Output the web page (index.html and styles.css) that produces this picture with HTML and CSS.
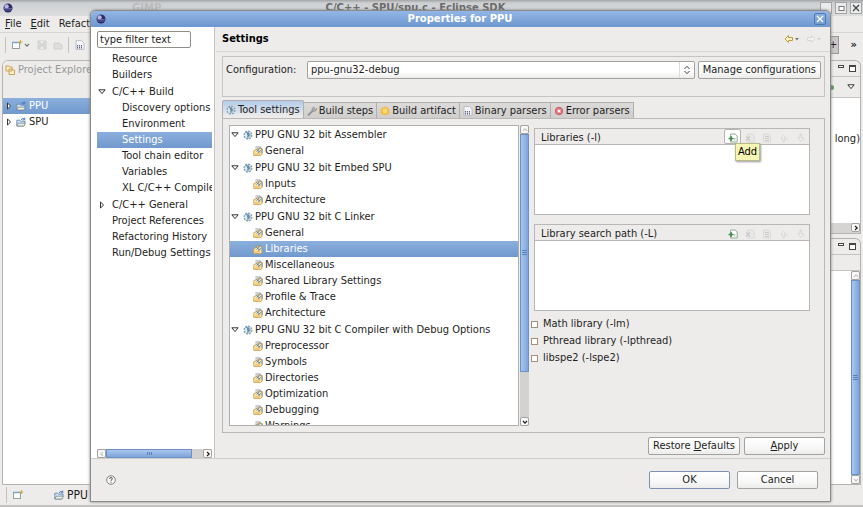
FILE: index.html
```html
<!DOCTYPE html>
<html lang="en">
<head>
<meta charset="utf-8">
<title>Properties for PPU</title>
<link rel="stylesheet" href="styles.css">
</head>
<body>
<svg class="defs" aria-hidden="true">
  <symbol id="orb" viewBox="0 0 10 10"><circle cx="5" cy="5" r="4.5" fill="#2b2a68"/><circle cx="3.6" cy="3.4" r="2.2" fill="#b9b4e0"/><path d="M1 5.5h8M1.5 7h7" stroke="#7d7ab8" stroke-width=".7"/></symbol>
  <symbol id="open" viewBox="0 0 8 8"><path d="M.8 1.8h6.4L4 5.6z" fill="#fff" stroke="#333" stroke-width="1"/></symbol>
  <symbol id="shut" viewBox="0 0 8 8"><path d="M2.5 1v6L5.6 4z" fill="#fff" stroke="#333" stroke-width="1"/></symbol>
  <symbol id="tool" viewBox="0 0 10 10"><circle cx="5" cy="5" r="3.9" fill="#dfeaf0" stroke="#7c9db2" stroke-width="1.2" stroke-dasharray="2 1"/><path d="M2.6 2.6l3 .6-1.2 1.3 1.6.6-1.2 1.6M5 2v6M6.8 3.4v3.2" fill="none" stroke="#4b7896" stroke-width=".9"/></symbol>
  <symbol id="opt" viewBox="0 0 10 10"><path d="M.8 4.600L3 3.800 4.200 2.400H9v6L7.600 9.400H.8z" fill="#fbe6ae" stroke="#cfa04a" stroke-width=".9"/><path d="M2.400 1h4.400L9.200 3.400v3.800" fill="none" stroke="#8c9cb0" stroke-width="1.100"/><path d="M3 2.600l3.800 3.800M6.600 2.600L3.600 5.600M8 4.200L5.400 6.800" stroke="#52749a" stroke-width=".9"/><path d="M2 8l5-.2" stroke="#e5b453" stroke-width="1.100"/></symbol>
  <symbol id="proj" viewBox="0 0 10 10"><path d="M.8 3.2h3l.8 1h4.6L8 9H.8z" fill="#cfe2f6" stroke="#6a8bb0" stroke-width=".9"/><path d="M2.2 6.2h7.2L8 9H1z" fill="#f8efd0" stroke="#7189a5" stroke-width=".8"/><path d="M5 2.8q2-2.4 3.6-.9M8.8.6v2.2H6.600" fill="none" stroke="#4176b3" stroke-width=".9"/></symbol>
  <symbol id="wrench" viewBox="0 0 10 10"><path d="M1 9.4L5.600 4.800" stroke="#909090" stroke-width="1.800"/><path d="M5 5.400V2.600L7.200.8v2l1.600.8L9.600 2q.2 3-2.400 3.600z" fill="#aaa" stroke="#898989" stroke-width=".5"/></symbol>
  <symbol id="sun" viewBox="0 0 10 10"><path d="M5 0l1.100 1.500L8 .9v1.900l2 .4L8.800 5l1.200 1.800-2 .4v1.900l-1.900-.6L5 10 3.900 8.500 2 9.100V7.200L0 6.800 1.200 5 0 3.200l2-.4V.9l1.900.6z" fill="#f5b942"/><circle cx="5" cy="5" r="2.400" fill="#ffdc74"/></symbol>
  <symbol id="bin" viewBox="0 0 10 10"><path d="M1 .6h5.400L9 3v6.400H1z" fill="#f6f6fa" stroke="#b4b4c2" stroke-width=".8"/><path d="M2.500 5v3.600M4.500 5v3.600M6.500 5v3.600" stroke="#5e6587" stroke-width="1.100" stroke-dasharray="1.500 .6"/></symbol>
  <symbol id="err" viewBox="0 0 10 10"><circle cx="5" cy="5" r="3.700" fill="#e4717a" stroke="#cf5d66" stroke-width="1"/><path d="M3.600 3.600l2.800 2.800M6.400 3.600L3.600 6.400" stroke="#fff" stroke-width="1.200"/></symbol>
  <symbol id="add" viewBox="0 0 10 10"><path d="M2.600 1h4.600L9.200 3v6H2.600z" fill="#fff" stroke="#88a48b" stroke-width=".9"/><path d="M.6 5.500h5M3.100 3v5" stroke="#3f8a4b" stroke-width="1.500"/><path d="M6.800 5v2.500" stroke="#9cc3a2" stroke-width="1"/></symbol>
  <symbol id="del" viewBox="0 0 10 10"><path d="M2.600 1h4.600L9.200 3v6H2.600z" fill="#e9e8e7" stroke="#d8d7d6" stroke-width=".9"/><path d="M1 3.500l4 4M5 3.500l-4 4" stroke="#cbcac9" stroke-width="1.200"/></symbol>
  <symbol id="edit" viewBox="0 0 10 10"><path d="M1.500 1h5L8.500 3v6h-7z" fill="#e9e8e7" stroke="#d8d7d6" stroke-width=".9"/><path d="M3 3.500h4M3 5.500h4M3 7.500h4" stroke="#cbcac9"/></symbol>
  <symbol id="up" viewBox="0 0 10 10"><path d="M4 9V5.500H2L4.500 2 7 5.500H5.400V9z" fill="#f4f3f2" stroke="#d2d1d0" stroke-width=".8"/><path d="M8 5v3" stroke="#ddd" /></symbol>
  <symbol id="down" viewBox="0 0 10 10"><path d="M4 1v3.500H2L4.500 8.500 7 4.500H5.400V1z" fill="#f4f3f2" stroke="#d2d1d0" stroke-width=".8"/><path d="M8 5v3" stroke="#ddd"/></symbol>
  <symbol id="min" viewBox="0 0 9 9"><rect x="1.500" y="1.500" width="5" height="2" fill="#fff" stroke="#444"/></symbol>
  <symbol id="max" viewBox="0 0 9 9"><rect x="1.500" y="1.500" width="6" height="6" fill="#fff" stroke="#444"/><path d="M1 2.500h7" stroke="#444"/></symbol>
  <symbol id="box" viewBox="0 0 9 9"><rect x="2" y="2.500" width="5" height="4" fill="#fff" stroke="#777"/></symbol>
  <symbol id="cross" viewBox="0 0 10 10"><path d="M2 2l6 6M8 2L2 8" stroke="currentColor" stroke-width="1.300"/></symbol>
  <symbol id="new" viewBox="0 0 12 10"><rect x="1.500" y="2.500" width="7" height="6" fill="#fff" stroke="#8fa59a"/><path d="M1 2.500h8" stroke="#79a3c8" stroke-width="1.500"/><path d="M9.500 0v4M7.500 2h4" stroke="#d9ac38"/></symbol>
  <symbol id="chev" viewBox="0 0 8 8"><path d="M2 3l2 2.200L6 3" fill="none" stroke="currentColor" stroke-width="1.200"/></symbol>
</svg>

<div class="desktop">
  <header class="main-title">
    <svg class="i10"><use href="#orb"/></svg>
    <span class="ghost">GIMP</span>
    <span class="main-name">C/C++ - SPU/spu.c - Eclipse SDK</span>
    <span class="win-buttons">
      <button aria-label="Minimize"></button>
      <button aria-label="Maximize"><svg class="i9"><use href="#box"/></svg></button>
      <button aria-label="Close window"><svg class="i10"><use href="#cross"/></svg></button>
    </span>
  </header>
  <nav class="menubar">
    <a href="#"><u>F</u>ile</a><a href="#"><u>E</u>dit</a><a href="#">Refactor</a>
  </nav>
  <div class="toolbar">
    <span class="grip"></span>
    <svg class="tool-new"><use href="#new"/></svg>
    <svg class="i8 soft"><use href="#chev"/></svg>
    <svg class="i10 tool-off" viewBox="0 0 10 10"><path d="M1 1h8v8H1z" fill="#ddd" stroke="#d0d0d0"/><path d="M3 1v3h4V1M3 9V6h4v3" fill="#eee" stroke="#ccc"/></svg>
    <svg class="i10 tool-off" viewBox="0 0 10 10"><path d="M1 3h5l3 2v4H1z" fill="#ddd" stroke="#d0d0d0"/></svg>
    <span class="grip"></span>
    <svg class="i10 tool-bin"><use href="#bin"/></svg>
    <span class="grip"></span>
    <span class="perspective">+</span>
    <span class="more">»</span>
  </div>
  <div class="workspace">
    <section class="explorer">
      <h2><svg class="i10" viewBox="0 0 10 10"><path d="M1 1h3l1 1h2v4H1zM4 4h3l1 1h1.500v4.500H4z" fill="#fdeec4" stroke="#c8a559"/></svg>Project Explorer</h2>
      <ul>
        <li class="selected"><svg class="i8"><use href="#shut"/></svg><svg class="i10"><use href="#proj"/></svg>PPU</li>
        <li><svg class="i8"><use href="#shut"/></svg><svg class="i10"><use href="#proj"/></svg>SPU</li>
      </ul>
    </section>
    <div class="side">
      <section class="side-top">
        <div class="side-tabs"><svg class="i9"><use href="#min"/></svg><svg class="i9"><use href="#max"/></svg></div>
        <div class="side-tools"><span class="dot"></span><svg class="i8"><use href="#open"/></svg></div>
        <div class="side-text">long)</div>
        <div class="side-scroll"><span class="sb-btn"><svg class="i8 right"><use href="#chev"/></svg></span></div>
      </section>
      <section class="side-bottom">
        <div class="side-tabs"><svg class="i9"><use href="#min"/></svg><svg class="i9"><use href="#max"/></svg></div>
        <div class="side-gap"></div>
        <div class="side-body">
          <div class="vscroll">
            <span class="sb-btn off"><svg class="i8 flip"><use href="#chev"/></svg></span>
            <span class="thumb whole"><i></i></span>
            <span class="sb-btn off"><svg class="i8"><use href="#chev"/></svg></span>
          </div>
        </div>
      </section>
    </div>
  </div>
  <footer class="statusbar"><span class="grip"></span><svg class="tool-new"><use href="#new"/></svg><svg class="i10 status-proj"><use href="#proj"/></svg>PPU</footer>
</div>

<div class="dialog" role="dialog" aria-labelledby="dialog-title">
  <div class="titlebar">
    <svg class="i10"><use href="#orb"/></svg>
    <h1 id="dialog-title">Properties for PPU</h1>
    <button class="close" aria-label="Close"><svg class="i10"><use href="#cross"/></svg></button>
  </div>
  <div class="content">
    <aside class="pages">
      <input class="filter" type="text" value="type filter text" aria-label="Filter">
      <ul class="page-tree">
        <li>Resource</li>
        <li>Builders</li>
        <li class="branch"><svg class="i8"><use href="#open"/></svg>C/C++ Build</li>
        <li class="sub">Discovery options</li>
        <li class="sub">Environment</li>
        <li class="sub selected">Settings</li>
        <li class="sub">Tool chain editor</li>
        <li class="sub">Variables</li>
        <li class="sub">XL C/C++ Compiler</li>
        <li class="branch"><svg class="i8"><use href="#shut"/></svg>C/C++ General</li>
        <li>Project References</li>
        <li>Refactoring History</li>
        <li>Run/Debug Settings</li>
      </ul>
      <div class="hscroll">
        <span class="sb-btn off"><svg class="i8 left"><use href="#chev"/></svg></span>
        <span class="thumb"><i></i></span>
        <span class="sb-btn"><svg class="i8 right"><use href="#chev"/></svg></span>
      </div>
    </aside>
    <main class="page">
      <div class="page-head">
        <h2>Settings</h2>
        <button aria-label="Back" class="back"><svg class="arrow" viewBox="0 0 16 10"><path d="M1 5l3.500-3.500v2h4v3h-4v2z" fill="#fdf3cf" stroke="#c19a3a"/><path d="M11 4h4l-2 2.500z" fill="#777"/></svg></button>
        <button aria-label="Forward" class="fwd"><svg class="arrow" viewBox="0 0 16 10"><path d="M9 5L5.500 1.500v2h-4v3h4v2z" fill="#f2f1f0" stroke="#d8d7d6"/><path d="M11 4h4l-2 2.500z" fill="#d2d1d0"/></svg></button>
      </div>
      <div class="page-body">
        <div class="config">
          <label for="config">Configuration:</label>
          <span class="select-wrap">
            <select id="config"><option>ppu-gnu32-debug</option></select>
            <svg class="spin" viewBox="0 0 8 10"><path d="M1.500 4L4 1.300 6.500 4M1.500 6L4 8.700 6.500 6" fill="none" stroke="#444"/></svg>
          </span>
          <button class="btn">Manage configurations</button>
        </div>
        <div class="tabs" role="tablist">
          <button role="tab" aria-selected="true" class="active"><svg class="i10"><use href="#tool"/></svg>Tool settings</button>
          <button role="tab"><svg class="i10"><use href="#wrench"/></svg>Build steps</button>
          <button role="tab"><svg class="i10"><use href="#sun"/></svg>Build artifact</button>
          <button role="tab"><svg class="i10"><use href="#bin"/></svg>Binary parsers</button>
          <button role="tab"><svg class="i10"><use href="#err"/></svg>Error parsers</button>
        </div>
        <div class="panel">
          <div class="tool-tree">
            <ul>
              <li class="branch"><svg class="i8"><use href="#open"/></svg><svg class="i10"><use href="#tool"/></svg>PPU GNU 32 bit Assembler</li>
              <li><svg class="i10"><use href="#opt"/></svg>General</li>
              <li class="branch"><svg class="i8"><use href="#open"/></svg><svg class="i10"><use href="#tool"/></svg>PPU GNU 32 bit Embed SPU</li>
              <li><svg class="i10"><use href="#opt"/></svg>Inputs</li>
              <li><svg class="i10"><use href="#opt"/></svg>Architecture</li>
              <li class="branch"><svg class="i8"><use href="#open"/></svg><svg class="i10"><use href="#tool"/></svg>PPU GNU 32 bit C Linker</li>
              <li><svg class="i10"><use href="#opt"/></svg>General</li>
              <li class="selected"><svg class="i10"><use href="#opt"/></svg>Libraries</li>
              <li><svg class="i10"><use href="#opt"/></svg>Miscellaneous</li>
              <li><svg class="i10"><use href="#opt"/></svg>Shared Library Settings</li>
              <li><svg class="i10"><use href="#opt"/></svg>Profile &amp; Trace</li>
              <li><svg class="i10"><use href="#opt"/></svg>Architecture</li>
              <li class="branch"><svg class="i8"><use href="#open"/></svg><svg class="i10"><use href="#tool"/></svg>PPU GNU 32 bit C Compiler with Debug Options</li>
              <li><svg class="i10"><use href="#opt"/></svg>Preprocessor</li>
              <li><svg class="i10"><use href="#opt"/></svg>Symbols</li>
              <li><svg class="i10"><use href="#opt"/></svg>Directories</li>
              <li><svg class="i10"><use href="#opt"/></svg>Optimization</li>
              <li><svg class="i10"><use href="#opt"/></svg>Debugging</li>
              <li><svg class="i10"><use href="#opt"/></svg>Warnings</li>
            </ul>
          </div>
          <div class="vscroll">
            <span class="sb-btn off"><svg class="i8 flip"><use href="#chev"/></svg></span>
            <span class="thumb"><i></i></span>
            <span class="sb-btn"><svg class="i8"><use href="#chev"/></svg></span>
          </div>
          <div class="options">
            <section class="list">
              <div class="list-head">
                <h3>Libraries (-l)</h3>
                <span class="add-wrap">
                  <button class="hover" aria-label="Add library" aria-describedby="tip"><svg class="i10"><use href="#add"/></svg></button>
                  <span class="tip" id="tip" role="tooltip">Add</span>
                </span>
                <button disabled aria-label="Delete"><svg class="i10"><use href="#del"/></svg></button>
                <button disabled aria-label="Edit"><svg class="i10"><use href="#edit"/></svg></button>
                <button disabled aria-label="Move up"><svg class="i10"><use href="#up"/></svg></button>
                <button disabled aria-label="Move down"><svg class="i10"><use href="#down"/></svg></button>
              </div>
              <div class="list-body"></div>
            </section>
            <section class="list">
              <div class="list-head">
                <h3>Library search path (-L)</h3>
                <button aria-label="Add path"><svg class="i10"><use href="#add"/></svg></button>
                <button disabled aria-label="Delete"><svg class="i10"><use href="#del"/></svg></button>
                <button disabled aria-label="Edit"><svg class="i10"><use href="#edit"/></svg></button>
                <button disabled aria-label="Move up"><svg class="i10"><use href="#up"/></svg></button>
                <button disabled aria-label="Move down"><svg class="i10"><use href="#down"/></svg></button>
              </div>
              <div class="list-body"></div>
            </section>
            <div class="checks">
              <label><input type="checkbox">Math library (-lm)</label>
              <label><input type="checkbox">Pthread library (-lpthread)</label>
              <label><input type="checkbox">libspe2 (-lspe2)</label>
            </div>
          </div>
        </div>
        <div class="page-actions">
          <button class="btn">Restore <u>D</u>efaults</button>
          <button class="btn wide"><u>A</u>pply</button>
        </div>
      </div>
    </main>
  </div>
  <footer class="dialog-foot">
    <button class="help" aria-label="Help"><svg viewBox="0 0 10 10"><circle cx="5" cy="5" r="4.300" fill="#f8f8f8" stroke="#666" stroke-width=".8"/><path d="M3.600 4q0-1.500 1.400-1.500T6.400 3.800Q6.400 4.600 5 5.200v.7M5 6.800v1" fill="none" stroke="#444" stroke-width=".9"/></svg></button>
    <button class="btn wide ok">OK</button>
    <button class="btn wide">Cancel</button>
  </footer>
</div>
</body>
</html>
```
FILE: styles.css
```css
* { box-sizing: border-box; }

body {
  margin: 0;
  font: 11px/16px "DejaVu Sans Condensed", "DejaVu Sans", sans-serif;
  color: #1e1e1e;
  background: #edeceb;
  overflow: hidden;
}

h1, h2, h3, ul { margin: 0; padding: 0; font-size: inherit; list-style: none; }
button, input, select { font: inherit; color: inherit; }
button { padding: 0; border: 0; background: none; }
a { color: inherit; text-decoration: none; }
svg { display: block; flex: none; }
.defs { position: absolute; width: 0; height: 0; }
.i8 { width: 8px; height: 8px; }
.i9 { width: 9px; height: 9px; }
.i10 { width: 10px; height: 10px; }
.left { transform: rotate(90deg); }
.right { transform: rotate(-90deg); }
.flip { transform: rotate(180deg); }
.soft { color: #777; }

/* main window */
.desktop { display: flex; flex-direction: column; height: 100vh; }
.main-title {
  position: relative;
  display: flex;
  align-items: center;
  height: 16px;
  padding: 0 1px 0 3px;
  background: linear-gradient(#a4a4a4, #cdd0d3 3px, #dcdddd);
}
.ghost { margin-left: 119px; font: bold 10px/16px "DejaVu Sans", sans-serif; color: #b9bbbd; }
.main-name {
  position: absolute;
  left: 0;
  right: 32px;
  text-align: center;
  font: bold 10px/16px "DejaVu Sans", sans-serif;
  color: #6b6b6b;
}
.win-buttons { display: flex; gap: 3px; margin-left: auto; }
.win-buttons button {
  display: grid;
  place-items: center;
  width: 12px;
  height: 12px;
  border: 1px solid #a5a5a5;
  background: #ebebeb;
  color: #444;
}
.menubar {
  display: flex;
  gap: 9px;
  height: 17px;
  padding: 0 5px;
  border-bottom: 1px solid #d6d5d4;
}
.toolbar { display: flex; align-items: center; height: 27px; padding: 0 6px 3px 5px; }
.grip { width: 1px; height: 16px; background: #c2c1c0; }
.tool-new { width: 12px; height: 10px; margin-left: 5px; }
.tool-off { margin-left: 6px; }
.tool-off + .grip { margin-left: 5px; }
.tool-bin { margin: 0 6px; }
.perspective {
  margin-left: auto;
  width: 10px;
  height: 18px;
  border: 1px solid #999;
  border-left: 0;
  background: #c9c8c7;
  text-align: center;
}
.more { margin-left: 12px; font-weight: bold; }
.workspace { display: flex; flex: 1; justify-content: space-between; min-height: 0; }
.explorer {
  width: 35%;
  border: 1px solid #b4b3b2;
  border-radius: 6px 6px 0 0;
  margin-left: 2px;
  background: #fff;
}
.explorer h2 {
  display: flex;
  align-items: center;
  gap: 3px;
  height: 37px;
  padding: 0 2px 20px;
  border-radius: 6px 6px 0 0;
  background: #edeceb;
  font-weight: normal;
  color: #999;
}
.explorer li { display: flex; align-items: center; gap: 3px; height: 16px; padding-left: 2px; }
.selected { background: linear-gradient(#8bafdd, #7199ce); color: #fff; }

.side { display: flex; flex-direction: column; gap: 4px; width: 60px; padding-right: 2px; }
.side section { display: flex; flex-direction: column; border: 1px solid #b4b3b2; border-left: 0; }
.side-top { height: 174px; border-radius: 0 6px 0 0; }
.side-bottom { flex: 1; border-radius: 0 6px 0 0; }
.side-tabs {
  display: flex;
  align-items: center;
  justify-content: flex-end;
  gap: 2px;
  height: 16px;
  padding-right: 3px;
  border-bottom: 1px solid #c4c3c2;
}
.side-tools {
  display: flex;
  align-items: center;
  justify-content: flex-end;
  gap: 13px;
  height: 21px;
  padding-right: 5px;
  border-bottom: 1px solid #c4c3c2;
}
.dot { width: 5px; height: 5px; border-radius: 50%; background: #5c9c5f; }
.side-text { flex: 1; padding-top: 33px; background: #fff; text-align: right; }
.side-scroll { display: flex; justify-content: flex-end; height: 10px; background: #d5d4d3; }
.side-gap { height: 16px; border-bottom: 1px solid #c4c3c2; }
.side-body { display: flex; flex: 1; justify-content: flex-end; background: #fff; }

.statusbar {
  display: flex;
  align-items: center;
  height: 22px;
  padding-left: 6px;
  border-bottom: 2px solid #c4c3c2;
  font-size: 12px;
}
.status-proj { margin: 0 3px 0 30px; }

/* scroll bars */
.sb-btn {
  display: grid;
  place-items: center;
  flex: none;
  width: 9px;
  height: 9px;
  border: 1px solid #a3a2a1;
  border-radius: 2px;
  background: #fafafa;
}
.off { color: #c5c5c5; }
.hscroll { display: flex; height: 9px; background: #d3d2d1; }
.hscroll .thumb { width: 86px; margin-right: auto; background: linear-gradient(#a9c6ee, #7ea4da); border: 1px solid #6d90c2; }
.vscroll { display: flex; flex-direction: column; flex: none; width: 9px; background: #d3d2d1; }
.vscroll .thumb { height: 79%; margin-bottom: auto; background: linear-gradient(90deg, #a9c6ee, #7ea4da); border: 1px solid #6d90c2; }
.vscroll .whole { flex: 1; height: auto; }
.thumb { display: grid; place-items: center; }
.thumb i { width: 5px; height: 5px; background: repeating-linear-gradient(#5c80b4 0 1px, transparent 1px 2px); }
.hscroll .thumb i { background: repeating-linear-gradient(90deg, #5c80b4 0 1px, transparent 1px 2px); height: 3px; }

/* dialog window */
.dialog {
  position: absolute;
  inset: 10px 32px 5px 90px;
  display: flex;
  flex-direction: column;
  border: 1px solid #8a8a8a;
  border-radius: 6px 6px 0 0;
  background: #edeceb;
  box-shadow: 0 0 3px #777;
}
.titlebar {
  display: flex;
  align-items: center;
  height: 16px;
  padding: 0 4px 0 5px;
  border-radius: 5px 5px 0 0;
  background: linear-gradient(#93b6e5, #6d97d0);
}
.titlebar h1 {
  flex: 1;
  text-align: center;
  font: bold 10px/16px "DejaVu Sans", sans-serif;
  color: #fff;
}
.close {
  display: grid;
  place-items: center;
  width: 12px;
  height: 12px;
  border: 1px solid #4f77b0;
  border-radius: 2px;
  color: #fff;
}
.content { display: flex; flex: 1; min-height: 0; border-bottom: 1px solid #cfcecd; }
.pages {
  display: flex;
  flex-direction: column;
  width: 124px;
  padding: 4px 2px 0 6px;
  border-right: 1px solid #c5c4c3;
  background: #fff;
}
.filter {
  width: 94px;
  height: 17px;
  padding: 0 2px;
  border: 1px solid #8f8e8d;
  border-radius: 2px;
  background: #fff;
}
.page-tree { flex: 1; min-height: 0; padding-top: 3px; overflow: hidden; white-space: nowrap; }
.page-tree li { height: 16px; padding-left: 15px; }
.page-tree .sub { padding-left: 25px; }
.page-tree .branch { display: flex; align-items: center; gap: 6px; height: 17px; padding-left: 1px; }

.page { display: flex; flex-direction: column; flex: 1; min-width: 0; margin-left: 1px; }
.page-head {
  display: flex;
  align-items: center;
  gap: 6px;
  height: 25px;
  padding: 0 8px 0 6px;
  border-bottom: 1px solid #d6d5d4;
}
.page-head h2 { flex: 1; color: #000; }
.arrow { width: 16px; height: 10px; }
.page-body { display: flex; flex-direction: column; flex: 1; min-height: 0; padding: 4px 5px 3px 6px; }
.config {
  display: flex;
  align-items: flex-start;
  gap: 3px;
  height: 41px;
  padding: 4px 3px 0 3px;
  border: 1px solid #c5c4c3;
}
.config label { width: 78px; line-height: 18px; }
.select-wrap { position: relative; flex: 1; }
.select-wrap select {
  display: block;
  width: 100%;
  height: 18px;
  padding: 0 3px;
  border: 1px solid #a3a2a1;
  border-radius: 2px;
  background: linear-gradient(#fff, #fff 60%, #ececeb);
  appearance: none;
}
.spin {
  position: absolute;
  top: 1px;
  right: 1px;
  width: 15px;
  height: 16px;
  padding: 3px;
  border-left: 1px solid #dcdbda;
}
.btn {
  height: 18px;
  padding: 0 4px;
  border: 1px solid #a3a2a1;
  border-radius: 2px;
  background: linear-gradient(#fff, #f8f8f8 60%, #ececeb);
  white-space: nowrap;
}

.tabs { display: flex; align-items: flex-end; height: 21px; }
.tabs button {
  display: flex;
  align-items: center;
  gap: 2px;
  height: 16px;
  padding: 0 3px;
  border: 1px solid #b0afae;
  border-width: 1px 1px 0 0;
  background: linear-gradient(#dcdbda, #cfcecd);
  white-space: nowrap;
}
.tabs .active {
  height: 18px;
  border-left-width: 1px;
  border-radius: 2px 2px 0 0;
  background: linear-gradient(#b3cbe9, #edeceb 90%);
}
.panel {
  display: flex;
  flex: 1;
  min-height: 0;
  padding: 6px 14px 6px 6px;
  border: 1px solid #bab9b8;
}
.tool-tree {
  flex: 290 1 0;
  min-width: 0;
  margin-right: 1px;
  border: 1px solid #b0afae;
  background: #fff;
  overflow: hidden;
  white-space: nowrap;
}
.tool-tree li { display: flex; align-items: center; gap: 2px; height: 16px; padding-left: 23px; }
.tool-tree .branch { height: 17px; padding-left: 1px; }
.tool-tree .branch .i8 { margin-right: 2px; }
.options { flex: 278 1 0; min-width: 0; margin-left: 5px; padding-top: 3px; }
.list { margin-bottom: 9px; border: 1px solid #b8b7b6; }
.list-head {
  display: flex;
  align-items: center;
  height: 16px;
  border-bottom: 1px solid #b8b7b6;
}
.list-head h3 { flex: 1; padding: 2px 0 0 6px; font-weight: normal; }
.list-head button { display: grid; place-items: center; width: 17px; height: 16px; padding-top: 2px; }
.add-wrap { position: relative; }
.list-head .hover { height: 15px; border: 1px solid #b5b4b3; border-radius: 2px; background: #fff; }
.tip {
  position: absolute;
  top: 14px;
  left: 11px;
  z-index: 1;
  padding: 0 2px;
  border: 1px solid #b9b98a;
  background: #f6f6b4;
  box-shadow: 1px 1px 2px #999;
  color: #000;
}
.list-body { height: 69px; background: #fff; }
.checks { display: flex; flex-direction: column; gap: 1px; margin: -4px 0 0 -3px; }
.checks label { display: flex; align-items: center; gap: 5px; }
.checks input {
  width: 7px;
  height: 7px;
  margin: 0;
  border: 1px solid #a3907c;
  background: #fff;
  appearance: none;
}
.page-actions { display: flex; justify-content: flex-end; gap: 4px; padding-top: 4px; }
.wide { width: 81px; }

.dialog-foot { display: flex; align-items: center; gap: 7px; height: 42px; padding: 0 12px 0 15px; }
.help { width: 10px; height: 10px; margin-right: auto; }
.ok { border-color: #7d92b5; }
```
